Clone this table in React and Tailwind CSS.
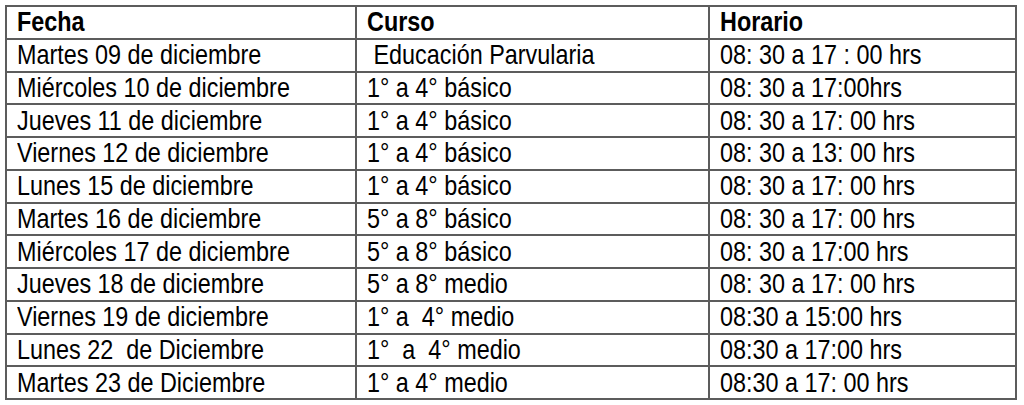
import React from 'react';

const rows = [
  ['Martes 09 de diciembre', '\u00a0Educación Parvularia', '08: 30 a 17 : 00 hrs'],
  ['Miércoles 10 de diciembre', '1° a 4° básico', '08: 30 a 17:00hrs'],
  ['Jueves 11 de diciembre', '1° a 4° básico', '08: 30 a 17: 00 hrs'],
  ['Viernes 12 de diciembre', '1° a 4° básico', '08: 30 a 13: 00 hrs'],
  ['Lunes 15 de diciembre', '1° a 4° básico', '08: 30 a 17: 00 hrs'],
  ['Martes 16 de diciembre', '5° a 8° básico', '08: 30 a 17: 00 hrs'],
  ['Miércoles 17 de diciembre', '5° a 8° básico', '08: 30 a 17:00 hrs'],
  ['Jueves 18 de diciembre', '5° a 8° medio', '08: 30 a 17: 00 hrs'],
  ['Viernes 19 de diciembre', '1° a\u00a0 4° medio', '08:30 a 15:00 hrs'],
  ['Lunes 22\u00a0 de Diciembre', '1°\u00a0 a\u00a0 4° medio', '08:30 a 17:00 hrs'],
  ['Martes 23 de Diciembre', '1° a 4° medio', '08:30 a 17: 00 hrs'],
];

const cell = 'border-2 border-[#5c5c5c] p-0 pl-[10px] h-[32.75px] align-middle leading-none whitespace-nowrap';

// narrow face: the page has no Arial Narrow, so squeeze Liberation Sans
const Narrow = ({ children }) => (
  <span className="inline-block origin-left scale-x-[0.835]">{children}</span>
);

const App = () => {
  return (
    <div className="w-[1024px] h-[405px] bg-white pt-[5px] pl-[5px] text-black font-['Liberation_Sans',sans-serif] text-[28px]">
      <table className="border-collapse table-fixed w-[1010px]">
        <colgroup>
          <col className="w-[350px]" />
          <col className="w-[353px]" />
          <col className="w-[307px]" />
        </colgroup>
        <thead>
          <tr>
            <th className={`${cell} text-left font-bold`}><Narrow>Fecha</Narrow></th>
            <th className={`${cell} text-left font-bold`}><Narrow>Curso</Narrow></th>
            <th className={`${cell} text-left font-bold`}><Narrow>Horario</Narrow></th>
          </tr>
        </thead>
        <tbody>
          {rows.map((r, i) => (
            <tr key={i}>
              <td className={cell}><Narrow>{r[0]}</Narrow></td>
              <td className={cell}><Narrow>{r[1]}</Narrow></td>
              <td className={cell}><Narrow>{r[2]}</Narrow></td>
            </tr>
          ))}
        </tbody>
      </table>
    </div>
  );
};

export default App;
